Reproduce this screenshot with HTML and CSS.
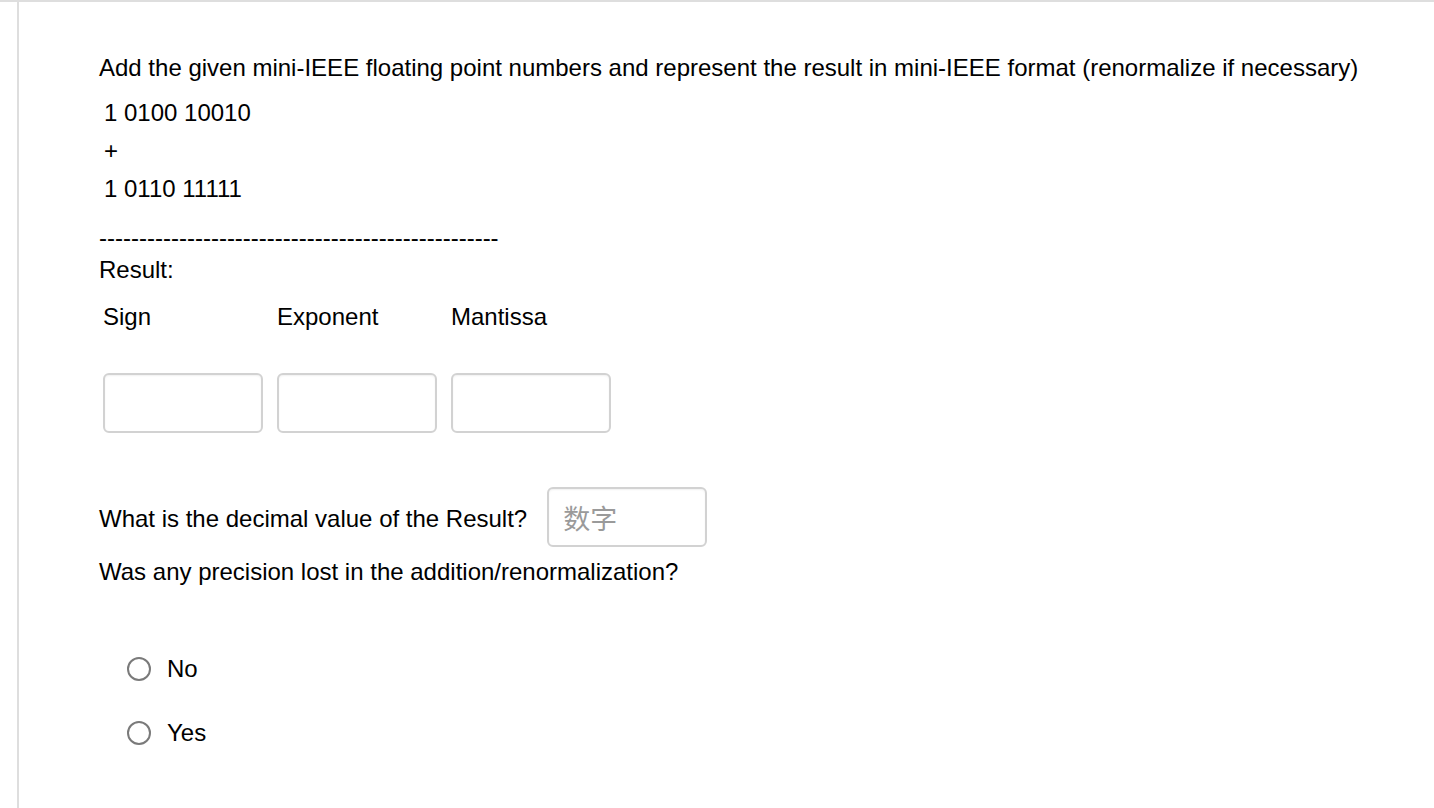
FILE: index.html
```html
<!DOCTYPE html>
<html lang="en">
<head>
<meta charset="utf-8">
<title>mini-IEEE</title>
<link rel="stylesheet" href="styles.css">
</head>
<body>
<div class="frame">
  <div class="gutter"></div>
  <div class="content">
    <p class="title">Add the given mini-IEEE floating point numbers and represent the result in mini-IEEE format (renormalize if necessary)</p>
    <p class="num first">1 0100 10010</p>
    <p class="num plus">+</p>
    <p class="num second">1 0110 11111</p>
    <p class="dashes">--------------------------------------------------</p>
    <p class="result">Result:</p>
    <div class="fields">
      <span class="flabel">Sign</span>
      <span class="flabel">Exponent</span>
      <span class="flabel">Mantissa</span>
      <input class="box" type="text" aria-label="Sign">
      <input class="box" type="text" aria-label="Exponent">
      <input class="box" type="text" aria-label="Mantissa">
    </div>
    <div class="qrow">
      <span>What is the decimal value of the Result?</span>
      <input class="box num-input" type="text" placeholder="数字">
    </div>
    <p class="q2">Was any precision lost in the addition/renormalization?</p>
    <div class="choices">
      <label class="choice"><span class="radio"></span><span>No</span></label>
      <label class="choice"><span class="radio"></span><span>Yes</span></label>
    </div>
  </div>
</div>
</body>
</html>
```

FILE: styles.css
```css
html, body {
  margin: 0;
  padding: 0;
  background: #fff;
}
body {
  font-family: "Liberation Sans", Arial, Helvetica, sans-serif;
  font-size: 24px;
  line-height: 28px;
  color: #000;
}
.frame {
  display: flex;
  border-top: 2px solid #dedede;
  min-height: 806px;
}
.gutter {
  width: 17px;
  border-right: 2px solid #dedede;
  flex: none;
}
.content {
  padding: 52px 0 0 80px;
  flex: 1;
}
p {
  margin: 0;
}
.num {
  padding-left: 5px;
}
.first { margin-top: 17px; }
.plus { margin-top: 10px; }
.second { margin-top: 10px; }
.dashes { margin-top: 21px; }
.result { margin-top: 4px; }
.fields {
  margin-top: 19px;
  margin-left: 4px;
  display: grid;
  grid-template-columns: repeat(3, 160px);
  column-gap: 14px;
  row-gap: 42px;
}
.box {
  box-sizing: border-box;
  width: 160px;
  height: 60px;
  margin: 0;
  border: 2px solid #d2d2d2;
  border-radius: 6px;
  background: #fff;
  box-shadow: inset 0 1px 2px rgba(0,0,0,0.06);
  font-family: "Liberation Sans", "Noto Sans CJK SC", sans-serif;
  font-size: 24px;
  padding: 0 14px;
  outline: none;
}
.qrow {
  margin-top: 54px;
  display: flex;
  align-items: center;
  gap: 20px;
}
.qrow span {
  position: relative;
  top: 2px;
}
.num-input {
  font-family: "Noto Sans CJK SC", sans-serif;
  font-size: 27px;
}
.num-input::placeholder {
  color: #9a9a9a;
}
.q2 { margin-top: 11px; }
.choices {
  margin-top: 71px;
  margin-left: 28px;
  display: flex;
  flex-direction: column;
  gap: 40px;
}
.choice {
  display: flex;
  align-items: center;
  gap: 16px;
  height: 24px;
}
.radio {
  box-sizing: border-box;
  width: 24px;
  height: 24px;
  border: 2px solid #7a7a7a;
  border-radius: 50%;
  background: #fff;
}
```
